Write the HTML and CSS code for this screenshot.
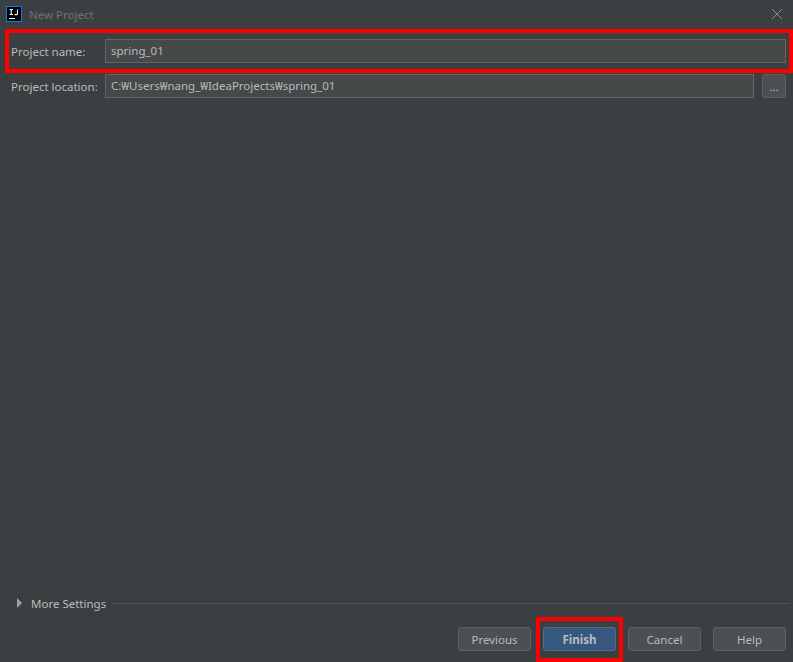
FILE: index.html
```html
<!DOCTYPE html>
<html lang="en">
<head>
<meta charset="utf-8">
<title>New Project</title>
<link rel="stylesheet" href="styles.css">
</head>
<body>
<div class="dialog">
  <header class="titlebar">
    <div class="logo"><svg width="16" height="16" viewBox="0 0 16 16"><rect x="0.5" y="0.5" width="15" height="15" fill="#000" stroke="#087cfa"/><path d="M3.5 3.5H7M5.2 3.5V8.5M3.5 8.5H7M11.5 3.5V7.6Q11.5 8.6 10.4 8.6H8.5" fill="none" stroke="#fff" stroke-width="1.1"/><rect x="3" y="12" width="6" height="1" fill="#fff"/></svg></div>
    <span class="title">New Project</span>
    <svg class="close" width="12" height="12" viewBox="0 0 12 12"><path d="M1 1L11 11M11 1L1 11" stroke="#8b8d8f" stroke-width="1" fill="none"/></svg>
  </header>
  <main class="form">
    <div class="row row-name">
      <label class="label">Project name:</label>
      <div class="field">spring_01</div>
    </div>
    <div class="row">
      <label class="label">Project location:</label>
      <div class="field">C:₩Users₩nang_₩IdeaProjects₩spring_01</div>
      <button class="browse">...</button>
    </div>
  </main>
  <section class="more">
    <span class="arrow"></span>
    <span class="more-text">More Settings</span>
    <span class="rule"></span>
  </section>
  <footer class="actions">
    <button class="btn">Previous</button>
    <button class="btn primary">Finish</button>
    <button class="btn">Cancel</button>
    <button class="btn">Help</button>
  </footer>
  <div class="mark mark-name"></div>
  <div class="mark mark-finish"></div>
</div>
</body>
</html>
```
FILE: styles.css
```css
* { box-sizing: border-box; }
html, body { margin: 0; padding: 0; }
body {
  width: 793px;
  height: 662px;
  overflow: hidden;
  background: #3c3f41;
  color: #bbbbbb;
  font-family: "Noto Sans", "Open Sans", sans-serif;
  font-size: 11.5px;
}
.dialog {
  position: relative;
  display: flex;
  flex-direction: column;
  width: 793px;
  height: 662px;
}
.titlebar {
  display: flex;
  align-items: center;
  height: 28px;
  padding: 0 10px 0 6px;
  flex: none;
}
.logo { display: flex; width: 16px; height: 16px; }
.title { margin-left: 7px; color: #6e7072; }
.close { margin-left: auto; }
.form {
  flex: 1;
  display: flex;
  flex-direction: column;
  gap: 11px;
  padding: 11px 7px 0 11px;
}
.row { display: flex; align-items: center; height: 24px; }
.label { width: 94px; flex: none; white-space: nowrap; }
.field {
  flex: 1;
  height: 24px;
  line-height: 22px;
  padding: 0 5px;
  background: #45494a;
  border: 1px solid #646464;
}
.browse {
  width: 24px;
  height: 24px;
  margin-left: 8px;
  padding: 0;
  background: #4c5052;
  border: 1px solid #5e6060;
  border-radius: 3px;
  color: #bbbbbb;
  font: inherit;
}
.more {
  display: flex;
  align-items: center;
  height: 18px;
  padding: 0 3px 0 17px;
  flex: none;
}
.arrow {
  width: 0;
  height: 0;
  border-left: 5px solid #9da0a2;
  border-top: 5px solid transparent;
  border-bottom: 5px solid transparent;
}
.more-text { margin-left: 9px; white-space: nowrap; }
.rule { flex: 1; height: 1px; margin-left: 6px; background: #515151; }
.actions {
  display: flex;
  justify-content: flex-end;
  gap: 12px;
  padding: 15px 7px 11px 0;
  flex: none;
}
.btn {
  width: 73px;
  height: 24px;
  padding: 1px 0 0;
  background: #4c5052;
  border: 1px solid #5e6060;
  border-radius: 3px;
  color: #bbbbbb;
  font: inherit;
}
.primary {
  background: #365880;
  border-color: #4c708c;
  font-weight: 700;
}
.mark { position: absolute; border: 4px solid #ff0000; }
.mark-name { left: 5px; top: 29px; width: 788px; height: 44px; }
.mark-finish { left: 536px; top: 617px; width: 87px; height: 45px; }
```
